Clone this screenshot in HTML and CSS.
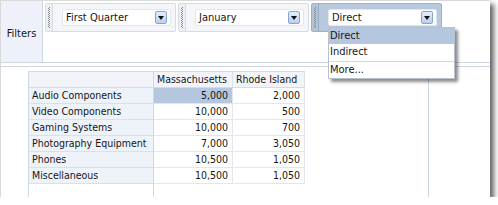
FILE: index.html
```html
<!DOCTYPE html>
<html>
<head>
<meta charset="utf-8">
<link rel="stylesheet" href="styles.css">
</head>
<body>
<div class="frame">
  <div class="filters-row">
    <div class="filters-label">Filters</div>
    <div class="filter-items">
      <div class="filter">
        <span class="grip"></span>
        <div class="field"><span class="field-text">First Quarter</span><span class="dd-btn"></span></div>
      </div>
      <div class="filter">
        <span class="grip"></span>
        <div class="field"><span class="field-text">January</span><span class="dd-btn"></span></div>
      </div>
      <div class="filter selected">
        <span class="grip"></span>
        <div class="field"><span class="field-text">Direct</span><span class="dd-btn"></span></div>
        <ul class="menu">
          <li class="menu-item active">Direct</li>
          <li class="menu-item">Indirect</li>
          <li class="menu-sep"></li>
          <li class="menu-item">More...</li>
        </ul>
      </div>
    </div>
  </div>
  <div class="body">
    <div class="data-area">
      <div class="pivot">
        <div class="cell corner"></div>
        <div class="cell colhead">Massachusetts</div>
        <div class="cell colhead">Rhode Island</div>

        <div class="cell rowhead">Audio Components</div>
        <div class="cell num sel">5,000</div>
        <div class="cell num">2,000</div>

        <div class="cell rowhead">Video Components</div>
        <div class="cell num">10,000</div>
        <div class="cell num">500</div>

        <div class="cell rowhead">Gaming Systems</div>
        <div class="cell num">10,000</div>
        <div class="cell num">700</div>

        <div class="cell rowhead">Photography Equipment</div>
        <div class="cell num">7,000</div>
        <div class="cell num">3,050</div>

        <div class="cell rowhead">Phones</div>
        <div class="cell num">10,500</div>
        <div class="cell num">1,050</div>

        <div class="cell rowhead">Miscellaneous</div>
        <div class="cell num">10,500</div>
        <div class="cell num">1,050</div>

        <div class="cell blank"></div>
        <div class="cell empty"></div>
        <div class="cell empty"></div>
      </div>
    </div>
    <div class="side"></div>
  </div>
</div>
</body>
</html>
```

FILE: styles.css
```css
* { box-sizing: border-box; }

html, body {
  margin: 0;
  padding: 0;
  background: #ffffff;
}

body {
  font-family: "DejaVu Sans Condensed", "DejaVu Sans", sans-serif;
  font-stretch: condensed;
  font-size: 10.5px;
  color: #161616;
}

.frame {
  width: 490px;
  height: 197px;
  border-top: 1px solid #d9d9d9;
  border-left: 1px solid #d9d9d9;
  box-shadow: 4px 4px 5px rgba(0, 0, 0, 0.6);
  background: #ffffff;
  display: flex;
  flex-direction: column;
  overflow: hidden;
}

/* ---------- filter bar ---------- */
.filters-row {
  flex: none;
  display: flex;
  height: 62px;
  border-bottom: 1px solid #cdd6e2;
}

.filters-label {
  width: 42px;
  flex: none;
  border-right: 1px solid #cdd6e2;
  background: #eef1f9;
  display: flex;
  align-items: center;
  justify-content: center;
  padding-top: 3px;
  font-size: 11px;
}

.filter-items {
  display: flex;
  align-items: flex-start;
  gap: 2px;
  padding: 2px 0 0 2px;
}

.filter {
  position: relative;
  display: flex;
  align-items: center;
  width: 131px;
  height: 29px;
  border: 1px solid #d6dce6;
  border-radius: 2px;
  background: #f4f6fa;
  padding-right: 4px;
}

.filter.selected {
  background: #b8c8dd;
  border-color: #9db1ca;
}

.grip {
  align-self: stretch;
  width: 7px;
  flex: none;
  border-right: 1px solid #d6dce6;
  background: #eceff4;
  display: flex;
  align-items: center;
  justify-content: center;
}

.filter.selected .grip {
  background: #b3c4da;
  border-right-color: #98adc8;
}

.grip::before {
  content: "";
  width: 2px;
  height: 21px;
  background-image: conic-gradient(#8f8f8f 25%, transparent 0 50%, #8f8f8f 0 75%, transparent 0);
  background-size: 2px 2px;
}

.field {
  flex: 1;
  margin-left: 9px;
  height: 17px;
  background: #ffffff;
  border: 1px solid #e3e7ed;
  border-radius: 2px;
  display: flex;
  align-items: center;
  padding: 0 3px;
  font-size: 11px;
}

.field-text {
  flex: 1;
  white-space: nowrap;
}

.dd-btn {
  flex: none;
  width: 12px;
  height: 13px;
  border: 1px solid #86a5cc;
  border-radius: 2px;
  background: linear-gradient(#e3eefa, #b9d0ee);
  display: flex;
  align-items: center;
  justify-content: center;
  padding-top: 1px;
}

.dd-btn::before {
  content: "";
  border-left: 3.5px solid transparent;
  border-right: 3.5px solid transparent;
  border-top: 4px solid #111111;
}

/* ---------- dropdown menu ---------- */
.menu {
  position: absolute;
  left: 16px;
  top: 23px;
  width: 127px;
  margin: 0;
  padding: 0;
  list-style: none;
  background: #ffffff;
  border: 1px solid #b7c0cc;
  box-shadow: 3px 3px 3px rgba(0, 0, 0, 0.45);
  z-index: 5;
  font-size: 11px;
}

.menu-item {
  height: 16px;
  line-height: 16px;
  padding-left: 1px;
  white-space: nowrap;
}

.menu-item.active {
  background: #b5c7de;
}

.menu-sep {
  height: 1px;
  margin-top: 1px;
  background: #d3d9e1;
}

/* ---------- data area ---------- */
.body {
  flex: 1;
  min-height: 0;
  display: flex;
  margin-top: 3px;
  border-top: 1px solid #cdd6e2;
}

.data-area {
  width: 428px;
  flex: none;
  border-right: 1px solid #cdd6e2;
  padding: 4px 0 0 27px;
}

.side {
  flex: 1;
}

.pivot {
  display: grid;
  grid-template-columns: 126px 79px 72px;
  grid-template-rows: 17px repeat(6, 16px) 20px;
  width: max-content;
}

.cell {
  white-space: nowrap;
  line-height: 15px;
  padding: 0 4px 0 3px;
  border-bottom: 1px solid #e3e7ed;
  border-right: 1px solid #e3e7ed;
}

.corner,
.colhead {
  border-top: 1px solid #d3dbe6;
  border-bottom-color: #d3dbe6;
  background: #f2f4f9;
}

.corner {
  border-left: 1px solid #cfd8e3;
  border-right-color: #cfd8e3;
}

.colhead {
  border-right-color: #dde2ea;
}

.rowhead {
  background: #eef2f9;
  border-left: 1px solid #cfd8e3;
  border-right-color: #cfd8e3;
  border-bottom-color: #d9e0ea;
}

.num {
  text-align: right;
}

.sel {
  background: #b5c7de;
}

.blank {
  border-left: 1px solid #cfd8e3;
  border-right-color: #cfd8e3;
  border-bottom: none;
}

.empty {
  border: none;
}
```
